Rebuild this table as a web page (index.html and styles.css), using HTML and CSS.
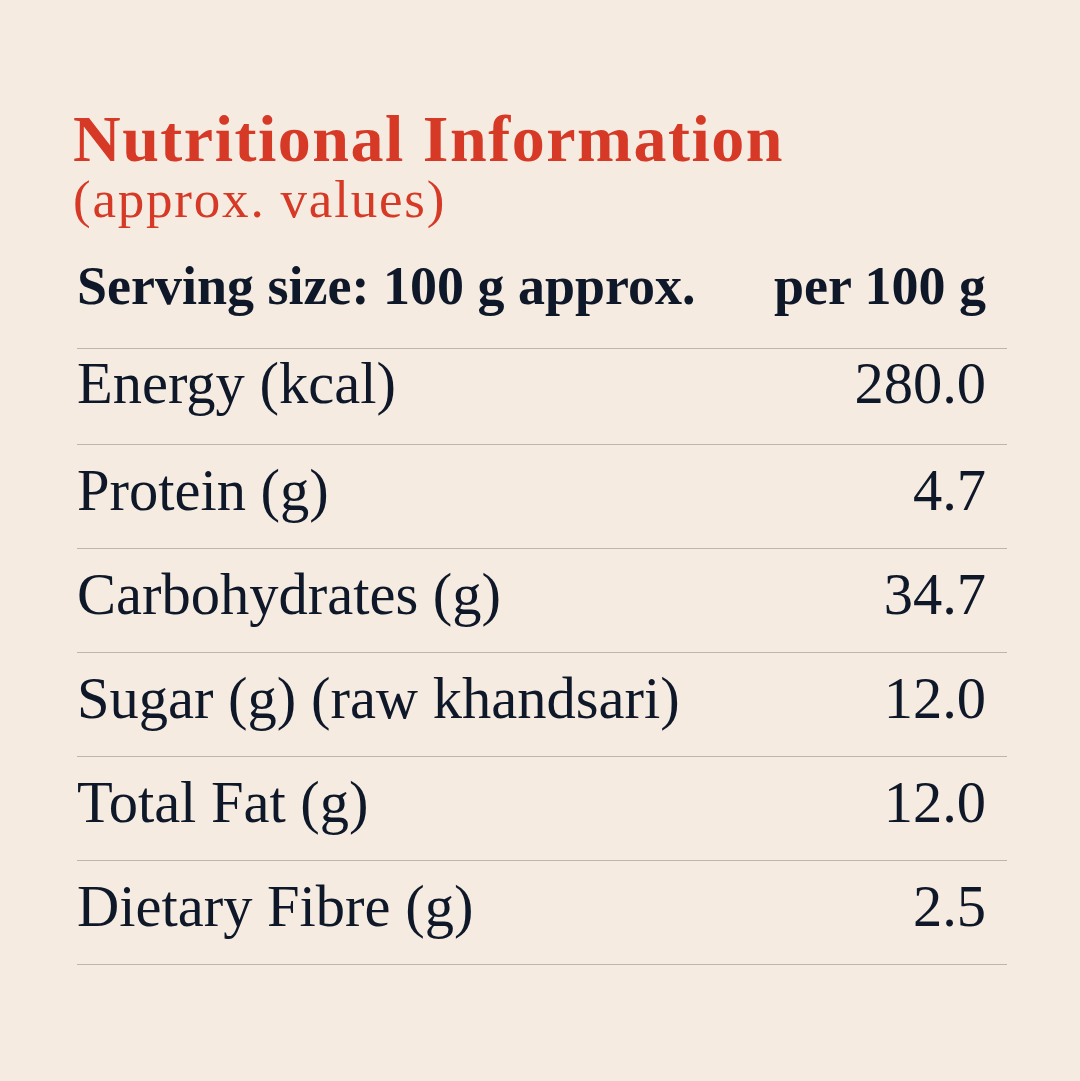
FILE: index.html
```html
<!DOCTYPE html>
<html lang="en">
<head>
<meta charset="utf-8">
<link rel="stylesheet" href="styles.css">
</head>
<body>
<main class="card">
  <h1 class="title">Nutritional Information</h1>
  <p class="subtitle">(approx. values)</p>
  <div class="table">
    <div class="row head"><span>Serving size: 100 g approx.</span><span class="val">per 100 g</span></div>
    <div class="row first"><span>Energy (kcal)</span><span class="val">280.0</span></div>
    <div class="row"><span>Protein (g)</span><span class="val">4.7</span></div>
    <div class="row"><span>Carbohydrates (g)</span><span class="val">34.7</span></div>
    <div class="row"><span>Sugar (g) (raw khandsari)</span><span class="val">12.0</span></div>
    <div class="row"><span>Total Fat (g)</span><span class="val">12.0</span></div>
    <div class="row"><span>Dietary Fibre (g)</span><span class="val">2.5</span></div>
  </div>
</main>
</body>
</html>
```

FILE: styles.css
```css
html, body {
  margin: 0;
  padding: 0;
  background: #f5ebe1;
}
body {
  width: 1080px;
  height: 1081px;
  font-family: "Liberation Serif", "DejaVu Serif", serif;
  color: #0e1829;
}
.card {
  padding: 106px 73px 0 73px;
}
.title {
  margin: 0;
  font-size: 66px;
  font-weight: 700;
  line-height: 66px;
  letter-spacing: 1.5px;
  color: #d63a27;
}
.subtitle {
  margin: 1px 0 0;
  font-size: 53px;
  line-height: 53px;
  letter-spacing: 1.8px;
  color: #d63a27;
}
.table {
  margin-top: 33px;
  padding-left: 4px;
}
.row {
  display: flex;
  justify-content: space-between;
  align-items: baseline;
  border-bottom: 1px solid #bcb6af;
  font-size: 58.5px;
  line-height: 58.5px;
  height: 104px;
  padding: 17px 21px 0 0;
  box-sizing: border-box;
}
.row.head {
  font-weight: 700;
  font-size: 54px;
  line-height: 54px;
  height: 90px;
  padding-top: 0;
}
.row.first {
  height: 96px;
  padding-top: 6px;
}
```
